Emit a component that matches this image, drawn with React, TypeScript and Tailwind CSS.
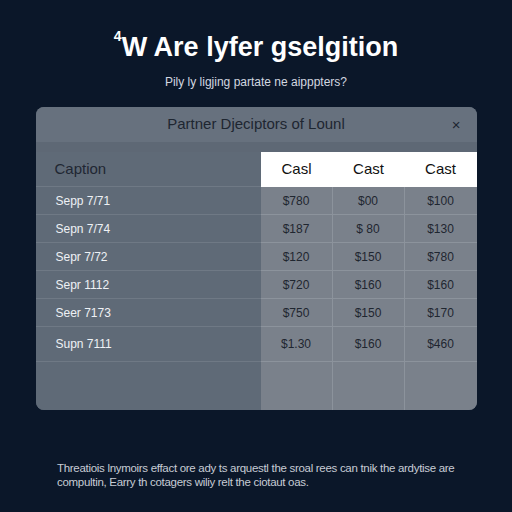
import React from "react";

const rows = [
  ["Sepp 7/71", "$780", "$00", "$100"],
  ["Sepn 7/74", "$187", "$ 80", "$130"],
  ["Sepr 7/72", "$120", "$150", "$780"],
  ["Sepr 1112", "$720", "$160", "$160"],
  ["Seer 7173", "$750", "$150", "$170"],
  ["Supn 7111", "$1.30", "$160", "$460"],
];

export default function App() {
  return (
    <div
      className="w-[512px] h-[512px] bg-[#0b1729] flex flex-col items-center overflow-hidden"
      style={{ fontFamily: "'Liberation Sans', Arial, sans-serif" }}
    >
      <h1 className="mt-[32px] text-[27px] leading-[30px] font-bold text-white">
        <sup className="text-[14px] font-bold align-[8px]">4</sup>W Are lyfer gselgition
      </h1>
      <p className="mt-[12px] text-[12px] leading-[16px] text-[#d3d8e0]">
        Pily ly ligjing partate ne aipppters?
      </p>

      <div className="mt-[17px] w-[441px] h-[303px] rounded-[8px] overflow-hidden bg-[#5f6a77] flex flex-col">
        <div className="h-[35px] bg-[#67717e] flex items-center justify-center relative shrink-0">
          <span className="text-[15px] text-[#1e2631]">Partner Djeciptors of Lounl</span>
          <span className="absolute right-[16px] top-[7px] text-[15px] text-[#1e2631]">×</span>
        </div>
        <div className="h-[10px] bg-[#5e6875] shrink-0" />
        <div className="flex flex-1">
          <div className="w-[225px] flex flex-col bg-[#5f6a77]">
            <div className="h-[35px] flex items-center pl-[19px] text-[15px] text-[#1f2733] border-b border-[#6f7985]">
              Caption
            </div>
            {rows.map((r, i) => (
              <div
                key={i}
                className={`${i === 5 ? "h-[35px]" : "h-[28px]"} flex items-center pl-[20px] text-[12px] text-[#eef1f5] border-b border-[#6f7985]`}
              >
                {r[0]}
              </div>
            ))}
            <div className="flex-1" />
          </div>
          <div className="flex-1 grid grid-cols-3 bg-[#7a818b]">
            {[1, 2, 3].map((c) => (
              <div key={c} className="flex flex-col">
                <div className="h-[35px] bg-white flex items-center justify-center text-[15px] font-medium text-[#111]">
                  {c === 1 ? "Casl" : "Cast"}
                </div>
                <div className={`flex-1 flex flex-col ${c < 3 ? "border-r border-[#8c939c]" : ""}`}>
                  {rows.map((r, i) => (
                    <div
                      key={i}
                      className={`${i === 5 ? "h-[35px]" : "h-[28px]"} flex items-center justify-center text-[12px] text-[#1f2630] border-b border-[#8c939c]`}
                    >
                      {r[c]}
                    </div>
                  ))}
                  <div className="flex-1" />
                </div>
              </div>
            ))}
          </div>
        </div>
      </div>

      <p className="mt-[51px] self-start ml-[57px] w-[410px] text-[11.5px] tracking-[-0.3px] leading-[14px] text-[#c7ccd5]">
        Threatiois lnymoirs effact ore ady ts arquestl the sroal rees can tnik the ardytise are compultin, Earry th cotagers wiliy relt the ciotaut oas.
      </p>
    </div>
  );
}
